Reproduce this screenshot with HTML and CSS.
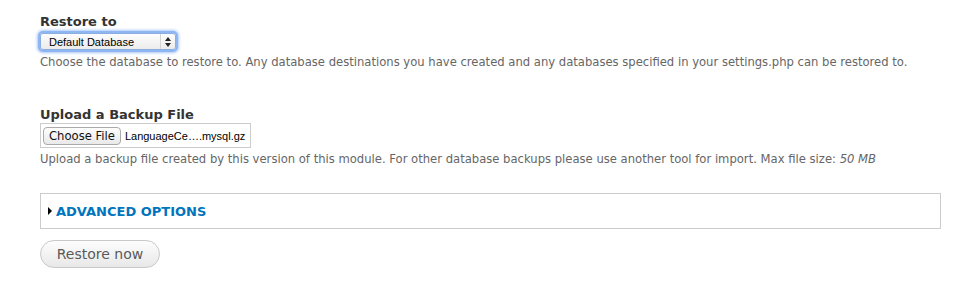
FILE: index.html
```html
<!DOCTYPE html>
<html>
<head>
<meta charset="utf-8">
<link rel="stylesheet" href="styles.css">
</head>
<body>
<form class="page">
  <div class="item item-select">
    <label class="label">Restore to</label>
    <div class="select-wrap">
      <span class="select">Default Database</span>
      <span class="arrows"><svg width="6" height="10" viewBox="0 0 6 10"><path d="M3 0 L6 4 L0 4 Z M3 10 L6 6 L0 6 Z" fill="#222"/></svg></span>
    </div>
    <div class="desc">Choose the database to restore to. Any database destinations you have created and any databases specified in your settings.php can be restored to.</div>
  </div>
  <div class="item item-file">
    <label class="label">Upload a Backup File</label>
    <div class="file">
      <span class="file-btn">Choose File</span>
      <span class="file-name">LanguageCe….mysql.gz</span>
    </div>
    <div class="desc desc-file">Upload a backup file created by this version of this module. For other database backups please use another tool for import. Max file size: <em>50 MB</em></div>
  </div>
  <fieldset class="fieldset">
    <span class="triangle"></span><span class="legend">ADVANCED OPTIONS</span>
  </fieldset>
  <div class="actions">
    <span class="button">Restore now</span>
  </div>
</form>
</body>
</html>
```
FILE: styles.css
```css
html, body { margin: 0; padding: 0; background: #fff; }
body { font-family: "DejaVu Sans", "Open Sans", sans-serif; color: #333; font-size: 12px; }
.page { padding: 14px 40px 0 40px; width: 901px; }
.item { display: flex; flex-direction: column; align-items: flex-start; }
.label { font-weight: bold; font-size: 13px; color: #333; line-height: 16px; height: 16px; }
.select-wrap {
  margin-top: 3px;
  width: 134px; height: 15px;
  border: 1px solid #8aaee0;
  border-radius: 3px;
  box-shadow: 0 0 0 2px #8db6f2, 0 0 3px 3px #a9c8f5;
  background: linear-gradient(#fdfdfd, #ececec);
  display: flex; align-items: center; justify-content: space-between;
  font-family: "Liberation Sans", Arial, sans-serif; font-size: 11px; color: #000;
}
.select { padding-left: 8px; }
.arrows { width: 14px; height: 15px; border-left: 1px solid #d4d4d4; display: flex; align-items: center; justify-content: center; }
.desc { margin-top: 5px; font-size: 11.6px; color: #666; line-height: 14px; white-space: nowrap; }
.desc em { font-style: italic; }
.item-file { margin-top: 38px; }
.file {
  margin-top: 0;
  width: 207px; height: 23px;
  border: 1px solid #ccc;
  display: flex; align-items: center; gap: 4px;
  padding-left: 2px;
  box-sizing: content-box;
}
.file-btn {
  height: 16px; padding: 0 5px;
  border: 1px solid #aaa; border-radius: 4px;
  background: linear-gradient(#fefefe, #e9e9e9);
  font-size: 11.6px; color: #111; line-height: 16px;
  white-space: nowrap;
}
.file-name { font-family: "Liberation Sans", Arial, sans-serif; font-size: 11px; color: #000; white-space: nowrap; }
.desc-file { margin-top: 4px; }
.fieldset {
  margin: 27px 0 0 0; padding: 0 0 0 7px;
  border: 1px solid #ccc;
  height: 36px; box-sizing: border-box;
  display: flex; align-items: center; gap: 4px;
}
.triangle { width: 0; height: 0; border-top: 4px solid transparent; border-bottom: 4px solid transparent; border-left: 4px solid #000; }
.legend { font-weight: bold; font-size: 13px; color: #0074bd; }
.actions { margin-top: 11px; }
.button {
  display: inline-flex; align-items: center; justify-content: center;
  width: 118px; height: 26px;
  border: 1px solid #c8c8c8; border-radius: 14px;
  background: linear-gradient(#fdfdfd, #e8e8e8);
  font-size: 14px; color: #5a5a5a;
}
```
